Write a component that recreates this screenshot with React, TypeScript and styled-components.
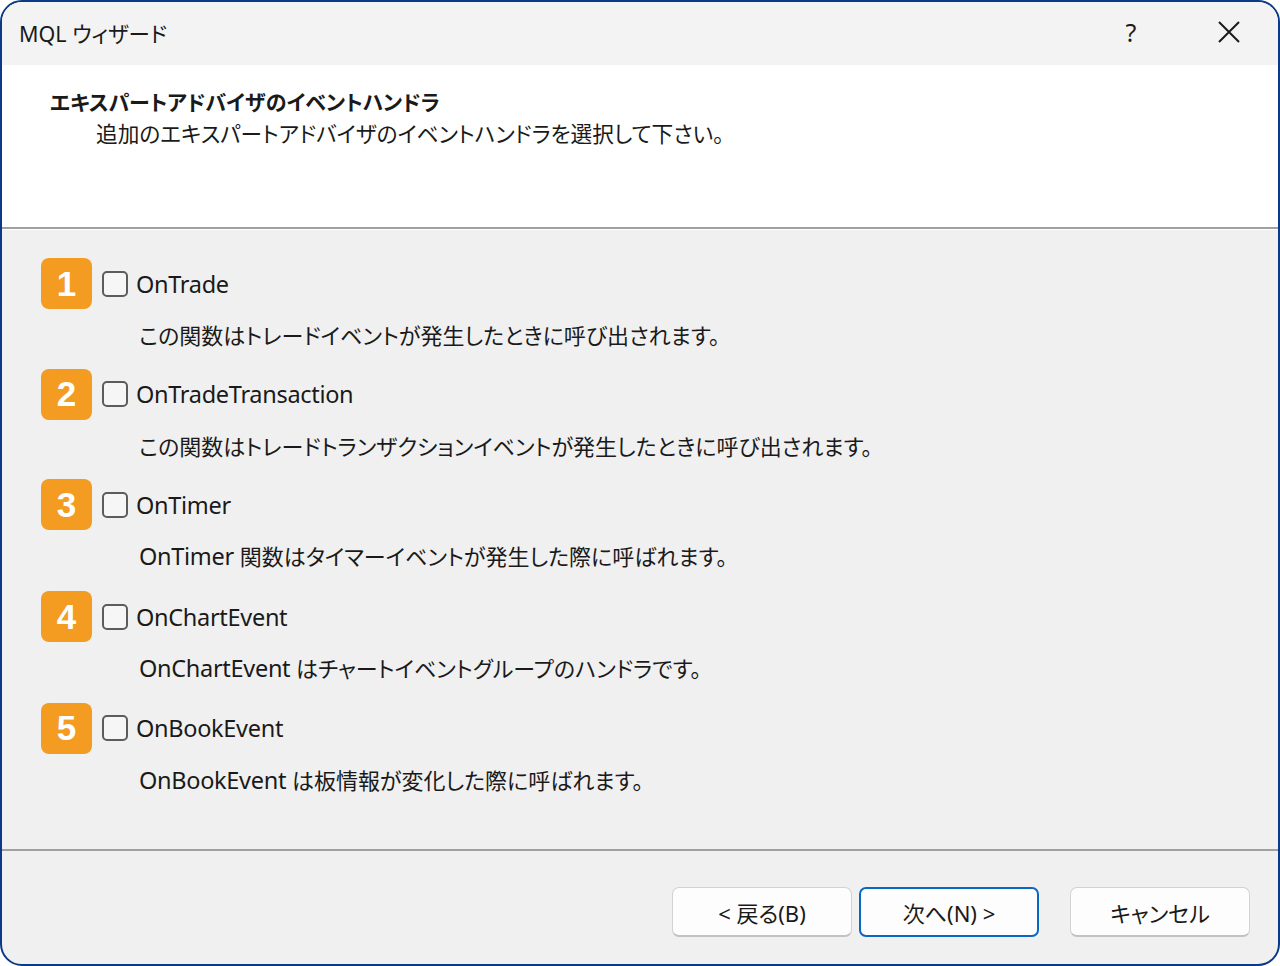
import styled, { createGlobalStyle } from "styled-components";

const GlobalStyle = createGlobalStyle`
  html, body {
    margin: 0;
    padding: 0;
    background: #ffffff;
  }
  * {
    box-sizing: border-box;
  }
`;

const Window = styled.div`
  width: 1280px;
  height: 966px;
  border: 2px solid #0a3a86;
  border-radius: 22px;
  overflow: hidden;
  background-color: #f0f0f0;
  font-family: "Noto Sans", "Noto Sans CJK JP", sans-serif;
  font-feature-settings: "palt";
  color: #1a1a1a;

  display: flex;
  flex-direction: column;
`;

const TitleBar = styled.div`
  height: 63px;
  background-color: #f3f3f3;
  display: flex;
  align-items: center;
  padding-left: 17px;
  padding-bottom: 3px;
`;

const TitleText = styled.span`
  font-size: 21.5px;
  flex: 1;
`;

const TitleButton = styled.button`
  width: 98px;
  height: 60px;
  border: none;
  background: transparent;
  display: flex;
  align-items: center;
  justify-content: center;
  font-family: "Noto Sans", sans-serif;
  font-size: 25px;
  color: #1a1a1a;
  padding: 0;
`;

const Header = styled.div`
  height: 164px;
  background-color: #ffffff;
  padding: 22px 0 0 48px;
  display: flex;
  flex-direction: column;
  border-bottom: 2px solid #a0a0a0;
`;

const HeaderTitle = styled.span`
  font-family: "Noto Sans CJK JP", sans-serif;
  font-size: 21px;
  font-weight: 700;
  line-height: 28px;
`;

const HeaderSub = styled.span`
  font-family: "Noto Sans CJK JP", sans-serif;
  font-size: 21.7px;
  line-height: 28px;
  margin-left: 46px;
  margin-top: 4px;
`;

const Body = styled.div`
  flex: 1;
  border-top: 1px solid #ffffff;
  padding: 28px 0 0 39px;
  display: flex;
  flex-direction: column;
  gap: 20.7px;
`;

const Handler = styled.div`
  display: flex;
  flex-direction: column;
  gap: 11px;
`;

const HandlerHead = styled.div`
  display: flex;
  align-items: center;
`;

const Badge = styled.div`
  width: 51px;
  height: 51px;
  border-radius: 8px;
  background-color: #f49c22;
  color: #ffffff;
  font-family: "Liberation Sans", "Noto Sans", sans-serif;
  font-weight: 700;
  font-size: 35px;
  display: flex;
  align-items: center;
  justify-content: center;
  margin-right: 10px;
`;

const Check = styled.span`
  width: 26px;
  height: 26px;
  border: 2px solid #5c5c5c;
  border-radius: 5px;
  background-color: #f6f6f6;
  margin-right: 8px;
`;

const HandlerName = styled.span`
  font-size: 23.5px;
  line-height: 28px;
  letter-spacing: -0.3px;
`;

const HandlerDesc = styled.span`
  margin-left: 98px;
  font-family: "Noto Sans CJK JP", sans-serif;
  font-size: 22px;
  line-height: 28px;
`;

const Code = styled.span`
  font-family: "Noto Sans", sans-serif;
  font-size: 23.5px;
  letter-spacing: -0.3px;
`;

const Footer = styled.div`
  height: 115px;
  border-top: 2px solid #a0a0a0;
  display: flex;
  align-items: flex-start;
  justify-content: flex-end;
  padding: 36px 28px 0 0;
`;

const Button = styled.button<{ $primary?: boolean; $gap?: number }>`
  width: 180px;
  height: 50px;
  margin-left: ${(p) => p.$gap ?? 0}px;
  border-radius: 7px;
  background-color: #fdfdfd;
  border: ${(p) => (p.$primary ? "2px solid #0a67c2" : "1px solid #d2d2d2")};
  border-bottom: ${(p) => (p.$primary ? "2px solid #0a67c2" : "2px solid #c2c2c2")};
  font-family: "Noto Sans", "Noto Sans CJK JP", sans-serif;
  font-feature-settings: "palt";
  font-size: 22px;
  color: #1a1a1a;
  display: flex;
  align-items: center;
  justify-content: center;
  padding: 0;
`;

const handlers = [
  { name: "OnTrade", code: "", desc: "この関数はトレードイベントが発生したときに呼び出されます。" },
  {
    name: "OnTradeTransaction",
    code: "",
    desc: "この関数はトレードトランザクションイベントが発生したときに呼び出されます。",
  },
  { name: "OnTimer", code: "OnTimer ", desc: "関数はタイマーイベントが発生した際に呼ばれます。" },
  { name: "OnChartEvent", code: "OnChartEvent ", desc: "はチャートイベントグループのハンドラです。" },
  { name: "OnBookEvent", code: "OnBookEvent ", desc: "は板情報が変化した際に呼ばれます。" },
];

export default function App() {
  return (
    <>
      <GlobalStyle />
      <Window>
        <TitleBar>
          <TitleText>MQL ウィザード</TitleText>
          <TitleButton>?</TitleButton>
          <TitleButton>
            <svg width="24" height="24" viewBox="0 0 24 24">
              <path d="M2 2 L22 22 M22 2 L2 22" stroke="#1a1a1a" strokeWidth="2" fill="none" />
            </svg>
          </TitleButton>
        </TitleBar>
        <Header>
          <HeaderTitle>エキスパートアドバイザのイベントハンドラ</HeaderTitle>
          <HeaderSub>追加のエキスパートアドバイザのイベントハンドラを選択して下さい。</HeaderSub>
        </Header>
        <Body>
          {handlers.map((h, i) => (
            <Handler key={h.name}>
              <HandlerHead>
                <Badge>{i + 1}</Badge>
                <Check />
                <HandlerName>{h.name}</HandlerName>
              </HandlerHead>
              <HandlerDesc>
                {h.code && <Code>{h.code}</Code>}
                {h.desc}
              </HandlerDesc>
            </Handler>
          ))}
        </Body>
        <Footer>
          <Button>&lt; 戻る(B)</Button>
          <Button $primary $gap={7}>次へ(N) &gt;</Button>
          <Button $gap={31}>キャンセル</Button>
        </Footer>
      </Window>
    </>
  );
}
